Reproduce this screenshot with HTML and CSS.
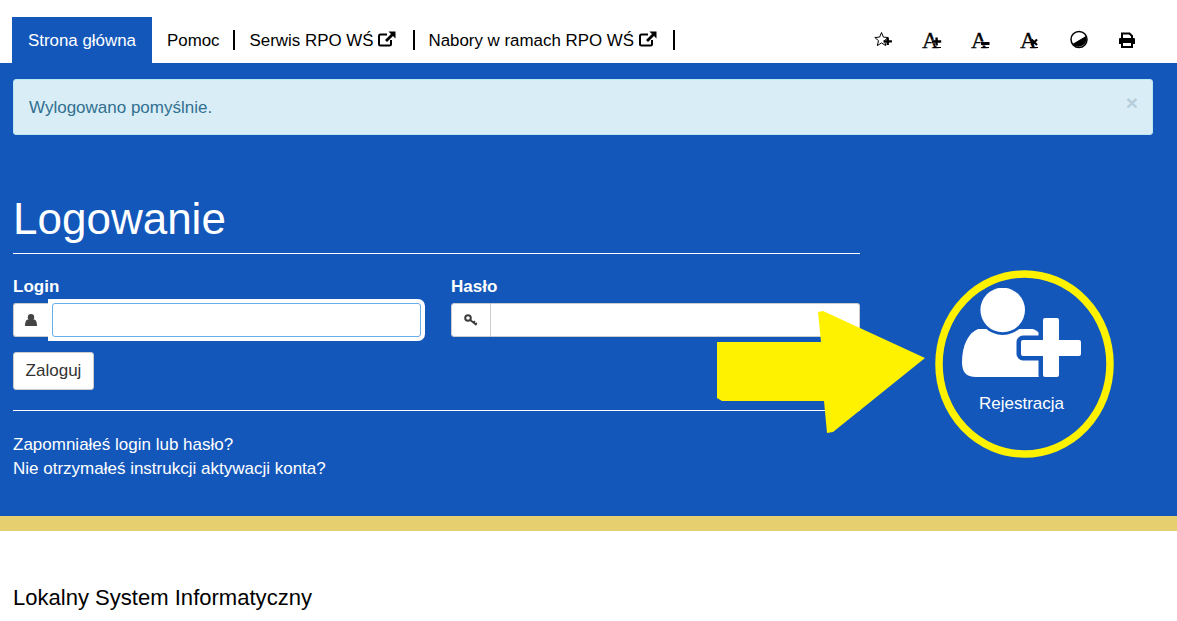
FILE: index.html
```html
<!DOCTYPE html>
<html lang="pl">
<head>
<meta charset="utf-8">
<title>Logowanie</title>
<link rel="stylesheet" href="styles.css">
</head>
<body>
<header class="topbar">
  <nav class="menu">
    <a class="menu-item active">Strona główna</a>
    <a class="menu-item sep">Pomoc</a>
    <a class="menu-item sep has-ext">Serwis RPO WŚ
      <svg class="ext" viewBox="0 0 18 16"><path d="M13 9v4a1.500 1.500 0 0 1-1.500 1.500h-9A1.500 1.500 0 0 1 1 13V5a1.500 1.500 0 0 1 1.500-1.500H9" fill="none" stroke="#000" stroke-width="2"/><path d="M10.500 0.500H17.500V7.500L15 5L9 11L7 9L13 3Z" fill="#000"/></svg></a>
    <a class="menu-item sep has-ext">Nabory w ramach RPO WŚ
      <svg class="ext" viewBox="0 0 18 16"><path d="M13 9v4a1.500 1.500 0 0 1-1.500 1.500h-9A1.500 1.500 0 0 1 1 13V5a1.500 1.500 0 0 1 1.500-1.500H9" fill="none" stroke="#000" stroke-width="2"/><path d="M10.500 0.500H17.500V7.500L15 5L9 11L7 9L13 3Z" fill="#000"/></svg></a>
  </nav>
  <div class="tools">
    <svg class="tool" viewBox="0 0 20 20"><path d="M8.500 2.500l1.900 4.600 4.800.4-3.700 3.100 1.200 5-4.200-2.700-4.200 2.700 1.200-5L1.800 7.500l4.800-.4z" fill="none" stroke="#000" stroke-width="1"/><path d="M10.500 10.200h3V7.800h2.400v2.400h3v2.400h-3V15h-2.400v-2.400h-3z" fill="#000"/></svg>
    <svg class="tool tool-tall" viewBox="0 -6 20 32"><text class="tool-a" x="0" y="17.500">A</text><path d="M10 10.300h3.400V7.400h2.400v2.900h3.400v2.400h-3.400v2.900h-2.400v-2.900H10z" fill="#000" stroke="#fff" stroke-width="0.800" paint-order="stroke"/><rect x="11" y="17" width="8" height="1" fill="#000"/></svg>
    <svg class="tool tool-tall" viewBox="0 -6 20 32"><text class="tool-a" x="0" y="17.500">A</text><rect x="10" y="12" width="8.500" height="3" fill="#000" stroke="#fff" stroke-width="0.800" paint-order="stroke"/><rect x="10" y="17" width="8" height="1" fill="#000"/></svg>
    <svg class="tool tool-tall" viewBox="0 -6 20 32"><text class="tool-a" x="0" y="17.500">A</text><path d="M11.500 9.500l5.500 5.500M17 9.500l-5.500 5.500" stroke="#000" stroke-width="2.200"/><rect x="10" y="17" width="8" height="1" fill="#000"/></svg>
    <svg class="tool" viewBox="0 0 20 20"><circle cx="10" cy="9.500" r="8" fill="#fff" stroke="#000" stroke-width="1.500"/><path d="M3.500 14L17 6a8 8 0 0 1-13.500 8z" fill="#000"/></svg>
    <svg class="tool print" viewBox="0 0 20 20"><path d="M5 8V3.500h7.500L15 6v2" fill="none" stroke="#000" stroke-width="2"/><path d="M3 8h14a1 1 0 0 1 1 1v5h-3v-2H5v2H2V9a1 1 0 0 1 1-1z" fill="#000"/><path d="M5 12h10v5H5z" fill="#fff" stroke="#000" stroke-width="2"/></svg>
  </div>
</header>

<main class="hero">
  <div class="alert">
    <span>Wylogowano pomyślnie.</span>
    <span class="close">×</span>
  </div>
  <div class="content">
    <section class="login">
      <h1 class="title">Logowanie</h1>
      <form class="fields">
        <div class="field">
          <label class="label">Login</label>
          <div class="group">
            <span class="addon addon-user">
              <svg class="addon-icon" viewBox="0 0 12 12"><circle cx="6" cy="3.200" r="3.200" fill="#444"/><path d="M0 12c0-4.500 1.500-6.500 3-6.500h6c1.500 0 3 2 3 6.500z" fill="#444"/></svg>
            </span>
            <span class="focus-ring"><input class="input focused" type="text"></span>
          </div>
        </div>
        <div class="field">
          <label class="label">Hasło</label>
          <div class="group">
            <span class="addon addon-wide">
              <svg class="addon-key" viewBox="0 0 14 12"><circle cx="4" cy="4" r="2.800" fill="none" stroke="#3d3d3d" stroke-width="2"/><path d="M6.200 6l6.300 5M9.500 8.600l1.400-1.400M11.400 10.200l1.400-1.400" stroke="#3d3d3d" stroke-width="1.700" fill="none"/></svg>
            </span>
            <input class="input" type="password">
          </div>
        </div>
      </form>
      <button class="btn" type="button">Zaloguj</button>
      <hr class="rule">
      <a class="link">Zapomniałeś login lub hasło?</a>
      <a class="link">Nie otrzymałeś instrukcji aktywacji konta?</a>
    </section>
    <a class="register">
      <svg class="register-icon" viewBox="962 288 119 90">
        <path d="M978 329C968 333 962 346 962 362C962 372 966 377 976 377H1045V345C1045 337 1040 332 1033 329Z" fill="#fff"/>
        <circle cx="1002.700" cy="310" r="25" fill="#1357ba"/>
        <circle cx="1002.700" cy="310" r="22.300" fill="#fff"/>
        <path d="M1043 320a2 2 0 0 1 2-2h12a2 2 0 0 1 2 2v20h20a2 2 0 0 1 2 2v12a2 2 0 0 1-2 2h-20v19a2 2 0 0 1-2 2h-12a2 2 0 0 1-2-2v-19h-20a2 2 0 0 1-2-2v-12a2 2 0 0 1 2-2h20z" fill="#fff" stroke="#1357ba" stroke-width="9" paint-order="stroke"/>
      </svg>
      <span class="register-text">Rejestracja</span>
    </a>
  </div>
  <svg class="annotation" viewBox="0 63 1177 453">
    <polygon points="717,342 821,342 818,312 823,311 925,358 833,432 827,433 824,401 722,401 717,398" fill="#fff200"/>
    <ellipse cx="1024.500" cy="364" rx="85.500" ry="90" fill="none" stroke="#fff200" stroke-width="7.500"/>
  </svg>
</main>

<footer class="footer">Lokalny System Informatyczny</footer>
</body>
</html>
```

FILE: styles.css
```css
* { box-sizing: border-box; }
html, body { margin: 0; height: 100%; overflow: hidden; }
body {
  font-family: "Liberation Sans", Arial, sans-serif;
  font-size: 17px;
  color: #000;
  background: #fff;
}
.topbar {
  display: flex;
  align-items: center;
  height: 63px;
  padding: 17px 39px 0 12px;
}
.menu { display: flex; align-items: center; height: 46px; font-size: 16.900px; }
.menu-item {
  display: flex;
  align-items: center;
  gap: 5px;
  white-space: nowrap;
}
.menu-item.active {
  height: 46px;
  padding: 2px 16px 0;
  background: #1357ba;
  color: #fff;
}
.menu-item.sep {
  height: 20px;
  padding: 2px 14px 0;
  border-right: 2px solid #000;
}
.menu-item.sep:nth-child(2) { padding-left: 15px; padding-right: 13px; }
.menu-item.sep:nth-child(3) { padding-left: 15px; padding-right: 17px; }
.menu-item.sep:nth-child(4) { padding-left: 13px; padding-right: 16px; }
.ext { width: 18px; height: 16px; margin-top: -4px; }
.tools { display: flex; align-items: center; gap: 29px; margin-left: auto; }
.tool { width: 20px; height: 20px; }
.tool-tall { height: 32px; }
.print { margin-left: -1px; margin-right: 1px; }
.tool-a {
  font-family: "Liberation Serif", serif;
  font-weight: 400;
  font-size: 23px;
  stroke: #000;
  stroke-width: 0.300px;
}
.hero {
  position: relative;
  height: 453px;
  padding: 16px 24px 0 13px;
  background: #1357ba;
  color: #fff;
}
.alert {
  display: flex;
  justify-content: space-between;
  align-items: center;
  height: 56px;
  padding: 2px 14px 0 15px;
  background: #d9edf7;
  border: 1px solid #bce8f1;
  border-radius: 3px;
  color: #31708f;
}
.close {
  margin-top: -11px;
  font-size: 21px;
  font-weight: 700;
  line-height: 1;
  color: #b6ced9;
}
.content { display: flex; align-items: flex-start; }
.login { display: flex; flex-direction: column; width: 847px; }
.title {
  margin: 59px 0 0;
  padding-bottom: 9px;
  border-bottom: 1px solid #fff;
  font-size: 44px;
  font-weight: 400;
  line-height: 50px;
}
.fields {
  display: grid;
  grid-template-columns: 412px 409px;
  gap: 26px;
  margin-top: 22px;
}
.label {
  display: block;
  height: 20px;
  margin-bottom: 7px;
  padding-top: 1px;
  font-size: 17px;
  font-weight: 700;
  line-height: 20px;
}
.group { display: flex; height: 34px; }
.addon {
  display: flex;
  align-items: center;
  justify-content: center;
  width: 40px;
  background: #fff;
  border: 1px solid #ccc;
  border-right: 0;
  border-radius: 3px 0 0 3px;
}
.addon-user { padding-right: 5px; }
.addon-wide { border-right: 1px solid #ccc; }
.addon-icon { width: 12px; height: 12px; }
.addon-key { width: 14px; height: 12px; }
.focus-ring {
  position: relative;
  flex: 1;
  display: flex;
  margin: -4px 0 -4px -5px;
  padding: 4px;
  background: #fff;
  border-radius: 0 7px 7px 0;
}
.input {
  flex: 1;
  min-width: 0;
  height: 34px;
  padding: 0 12px;
  background: #fff;
  border: 1px solid #ccc;
  border-left: 0;
  border-radius: 0 3px 3px 0;
  outline: 0;
}
.input.focused {
  border: 1px solid #66afe9;
  border-radius: 3px;
}
.btn {
  align-self: flex-start;
  width: 81px;
  height: 38px;
  margin-top: 15px;
  padding: 0;
  background: #fff;
  border: 1px solid #ccc;
  border-radius: 3px;
  color: #333;
  font: inherit;
  font-size: 17px;
}
.rule {
  width: 100%;
  margin: 20px 0 22px;
  border: 0;
  border-top: 1px solid #fff;
}
.link { font-size: 17px; line-height: 24px; }
.register {
  display: flex;
  flex-direction: column;
  align-items: center;
  width: 119px;
  margin: 153px 0 0 102px;
}
.register-icon { width: 119px; height: 90px; }
.register-text {
  margin-top: 16px;
  font-size: 17px;
  line-height: 20px;
}
.annotation {
  position: absolute;
  top: 0;
  left: 0;
  width: 1177px;
  height: 453px;
  pointer-events: none;
}
.footer {
  height: 105px;
  padding: 54px 0 0 13px;
  border-top: 15px solid #e6cf6f;
  font-size: 22.050px;
  line-height: 26px;
}
```
